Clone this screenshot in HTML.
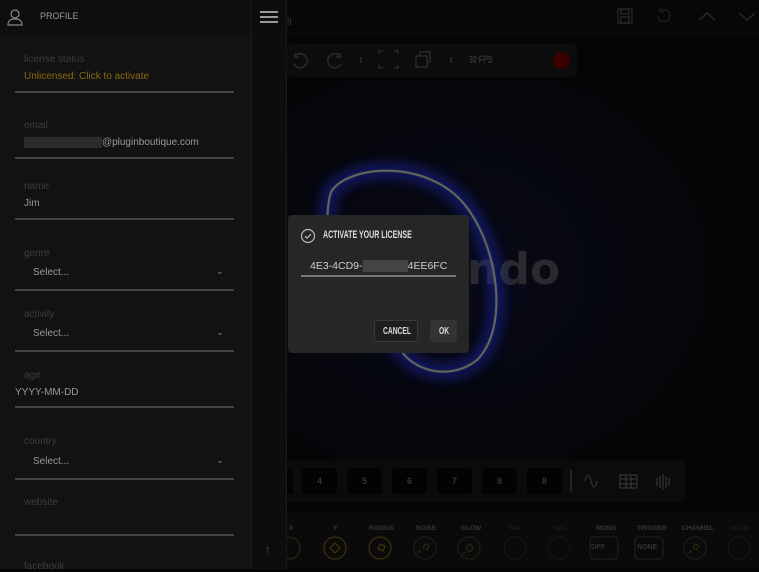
<!DOCTYPE html>
<html><head><meta charset="utf-8"><style>
*{margin:0;padding:0;box-sizing:border-box}
body{width:759px;height:569px;overflow:hidden;background:#050507;font-family:"Liberation Sans",sans-serif;position:relative}
.abs{position:absolute}
.side{left:0;top:0;width:251px;height:569px;background:#121212}
.sidehead{left:0;top:0;width:251px;height:34px;background:#0e0e0e}
.col{left:251px;top:0;width:36px;height:569px;background:#0d0d0d;border-left:1px solid #1a1a1a;border-right:1px solid #1a1a1a}
.lbl{font-size:10px;color:#3d3d3d;left:24px}
.val{font-size:10px;color:#9a9a9a}
.line{left:15px;width:219px;height:2px;background:#444}
.chev{left:216px;font-size:9px;color:#888}
.cond{font-weight:bold;transform:scaleX(.64);transform-origin:left center;white-space:nowrap}
</style></head><body>
<div class="abs" style="left:287px;top:0;width:472px;height:36px;background:#070707"></div>
<div class="abs" style="left:287px;top:17px;font-size:10px;color:#333">lt</div>
<svg class="abs" style="left:600px;top:0" width="159" height="36" fill="none" stroke="#262626" stroke-width="1.5">
<rect x="18" y="9" width="14" height="14" rx="1"/><rect x="21" y="9" width="8" height="5"/><rect x="21" y="17" width="8" height="6"/>
<path d="M60 11a6 6 0 1 1 -2 5M60 8v4h4" stroke="#1c1c1c"/>
<path d="M99 20l8-7 8 7"/><path d="M139 13l8 7 8-7"/>
</svg>
<div class="abs" style="left:287px;top:44px;width:290px;height:33px;background:#0c0c0c;border-radius:4px"></div>
<svg class="abs" style="left:287px;top:44px" width="290" height="33" fill="none" stroke="#2a2a2a" stroke-width="1.5">
<path d="M8 12a7 7 0 1 1 -1 8M8 9v4h4"/><path d="M53 12a7 7 0 1 0 1 8M53 9v4h-4"/>
<path d="M74 13v6"/><path d="M92 10v-3h4M107 7h4v3M111 21v3h-4M96 24h-4v-3"/>
<rect x="129" y="12" width="11" height="11"/><path d="M133 12v-4h10v10h-3"/><path d="M164 13v6"/>
</svg>
<div class="abs cond" style="left:469px;top:54px;font-size:11px;color:#333">30 FPS</div>
<div class="abs" style="left:553px;top:52px;width:17px;height:17px;border-radius:50%;background:#3a0000"></div>
<svg class="abs" style="left:287px;top:80px" width="472" height="380">
<defs><filter id="g" x="-50%" y="-50%" width="200%" height="200%"><feGaussianBlur stdDeviation="7"/></filter>
<radialGradient id="bg" cx="35%" cy="50%" r="60%"><stop offset="0" stop-color="#080a18"/><stop offset="1" stop-color="#050507"/></radialGradient></defs>
<rect width="472" height="380" fill="url(#bg)"/>
<text x="180" y="204" font-family="DejaVu Sans" font-weight="bold" font-size="44" fill="#2a2a2e">ndo</text>
<path d="M44 112 C60 85 140 78 178 125 C212 168 222 248 190 280 C168 298 130 296 112 268 C98 248 62 250 48 205 C40 175 38 130 44 112Z" fill="none" stroke="#1a28b0" stroke-width="10" filter="url(#g)" opacity=".8"/>
<path d="M44 112 C60 85 140 78 178 125 C212 168 222 248 190 280 C168 298 130 296 112 268 C98 248 62 250 48 205 C40 175 38 130 44 112Z" fill="none" stroke="#5d6658" stroke-width="2.2"/>
</svg>
<div class="abs" style="left:287px;top:460px;width:398px;height:42px;background:#0b0b0b;border-radius:4px"></div>
<div class="abs" style="left:287px;top:468px;width:6px;height:26px;background:#030303"></div>
<div class="abs" style="left:302px;top:468px;font-size:9px;font-weight:bold;color:#333;display:flex;gap:10px">
<span style="width:35px;height:26px;background:#030303;border-radius:3px;text-align:center;line-height:26px">4</span>
<span style="width:35px;height:26px;background:#030303;border-radius:3px;text-align:center;line-height:26px">5</span>
<span style="width:35px;height:26px;background:#030303;border-radius:3px;text-align:center;line-height:26px">6</span>
<span style="width:35px;height:26px;background:#030303;border-radius:3px;text-align:center;line-height:26px">7</span>
<span style="width:35px;height:26px;background:#030303;border-radius:3px;text-align:center;line-height:26px">8</span>
<span style="width:35px;height:26px;background:#030303;border-radius:3px;text-align:center;line-height:26px">8</span>
</div>
<svg class="abs" style="left:565px;top:468px" width="120" height="28" fill="none" stroke="#333" stroke-width="1.3">
<path d="M6 2v22"/><path d="M20 13c2-8 4-8 6 0s4 8 6 0"/>
<rect x="55" y="7" width="17" height="13"/><path d="M55 11h17M55 16h17M61 7v13M66 7v13"/>
<path d="M92 10v8M95 8v12M98 6v16M101 8v12M104 10v8"/>
</svg>
<div class="abs" style="left:287px;top:512px;width:472px;height:57px;background:#0a0a0a"></div>
<div class="abs" style="left:287px;top:525px;width:472px;font-size:6.5px;font-weight:bold;color:#383838">
<span class="abs" style="left:2px">X</span><span class="abs" style="left:46px">Y</span><span class="abs" style="left:82px">RADIUS</span><span class="abs" style="left:129px">NOISE</span><span class="abs" style="left:174px">GLOW</span><span class="abs" style="left:222px;color:#1c1c1c">N/A</span><span class="abs" style="left:267px;color:#1c1c1c">N/A</span><span class="abs" style="left:309px">MONO</span><span class="abs" style="left:350px">TRIGGER</span><span class="abs" style="left:395px">CHANNEL</span><span class="abs" style="left:443px;color:#1c1c1c">GLIDE</span>
</div>
<svg class="abs" style="left:287px;top:533px" width="472" height="30" fill="none" stroke-width="1.3">
<circle cx="2" cy="15" r="11" stroke="#2a2410"/><circle cx="48" cy="15" r="11" stroke="#3a300c"/><circle cx="93" cy="15" r="11" stroke="#3a300c"/>
<circle cx="138" cy="15" r="11" stroke="#1e1c12"/><circle cx="182" cy="15" r="11" stroke="#1e1c12"/>
<circle cx="228" cy="15" r="11" stroke="#151512"/><circle cx="272" cy="15" r="11" stroke="#151512"/>
<rect x="303" y="4" width="28" height="22" rx="4" stroke="#1e1e1e"/><rect x="348" y="4" width="28" height="22" rx="4" stroke="#1e1e1e"/>
<circle cx="408" cy="15" r="11" stroke="#1e1c12"/><circle cx="452" cy="15" r="11" stroke="#151512"/>
<path d="M48 10l5 5-5 5-5-5z" stroke="#3a300c"/><path d="M93 11l5 2-2 5-5-2z" stroke="#3a300c"/><path d="M138 11l4 2-2 4-4-2z M134 17l-3 3" stroke="#2a2410"/><path d="M183 11l3 5-4 3-3-5z M178 19l-3 3" stroke="#2a2410"/><path d="M408 11l4 2-2 4-4-2z M404 17l-2 4" stroke="#2a2410"/>
</svg>
<div class="abs" style="left:591px;top:544px;font-size:7px;font-weight:bold;color:#333">OFF</div>
<div class="abs" style="left:637px;top:544px;font-size:7px;font-weight:bold;color:#333">NONE</div>
<div class="abs" style="left:288px;top:215px;width:181px;height:138px;background:#262626;border-radius:4px"></div>
<svg class="abs" style="left:300px;top:228px" width="16" height="16" fill="none" stroke="#bbb" stroke-width="1.2"><circle cx="8" cy="8" r="6.5"/><path d="M5 8.2l2 2 4-4"/></svg>
<div class="abs cond" style="left:323px;top:229px;font-size:11px;color:#ddd">ACTIVATE YOUR LICENSE</div>
<div class="abs" style="left:310px;top:260px;font-size:10.5px;color:#cfcfcf">4E3-4CD9-<span style="color:#666;background:#555;letter-spacing:-1px;opacity:.6">▒▒▒▒▒▒▒</span>4EE6FC</div>
<div class="abs" style="left:301px;top:275px;width:155px;height:2px;background:#777"></div>
<div class="abs" style="left:374px;top:320px;width:44px;height:22px;border:1px solid #3a3a3a;border-radius:3px;background:#1e1e1e"></div>
<div class="abs cond" style="left:383px;top:325px;font-size:10.5px;color:#ddd">CANCEL</div>
<div class="abs" style="left:430px;top:320px;width:27px;height:22px;border-radius:3px;background:#333"></div>
<div class="abs cond" style="left:439px;top:325px;font-size:10.5px;color:#ddd">OK</div>
<div class="abs side"></div>
<div class="abs sidehead"></div>
<svg class="abs" style="left:7px;top:8px" width="18" height="18" fill="none" stroke="#888" stroke-width="1.2"><circle cx="8" cy="6" r="4"/><path d="M1 17c0-5 3-6 7-6s7 1 7 6z"/></svg>
<div class="abs" style="left:40px;top:11px;font-size:9px;color:#999">PROFILE</div>
<div class="abs col"></div>
<div class="abs" style="left:260px;top:11px;width:18px;height:1.5px;background:#999;box-shadow:0 5px 0 #999,0 10px 0 #999"></div>
<div class="abs" style="left:265px;top:544px;font-size:11px;color:#555">↑</div>
<div class="abs lbl" style="top:54px">license status</div>
<div class="abs val" style="left:24px;top:71px;color:#8a6a12">Unlicensed: Click to activate</div>
<div class="abs line" style="top:91px"></div>
<div class="abs lbl" style="top:120px">email</div>
<div class="abs val" style="left:24px;top:137px"><span style="color:#333;background:#2a2a2a">▒▒▒▒▒▒▒▒▒▒▒</span>@pluginboutique.com</div>
<div class="abs line" style="top:157px"></div>
<div class="abs lbl" style="top:181px">name</div>
<div class="abs val" style="left:24px;top:198px">Jim</div>
<div class="abs line" style="top:218px"></div>
<div class="abs lbl" style="top:248px">genre</div>
<div class="abs val" style="left:33px;top:267px">Select...</div>
<div class="abs chev" style="top:266px">⌄</div>
<div class="abs line" style="top:289px"></div>
<div class="abs lbl" style="top:309px">activity</div>
<div class="abs val" style="left:33px;top:328px">Select...</div>
<div class="abs chev" style="top:327px">⌄</div>
<div class="abs line" style="top:350px"></div>
<div class="abs lbl" style="top:370px">age</div>
<div class="abs val" style="left:15px;top:387px">YYYY-MM-DD</div>
<div class="abs line" style="top:406px"></div>
<div class="abs lbl" style="top:436px">country</div>
<div class="abs val" style="left:33px;top:456px">Select...</div>
<div class="abs chev" style="top:455px">⌄</div>
<div class="abs line" style="top:478px"></div>
<div class="abs lbl" style="top:497px">website</div>
<div class="abs line" style="top:534px"></div>
<div class="abs lbl" style="top:561px">facebook</div>
</body></html>
